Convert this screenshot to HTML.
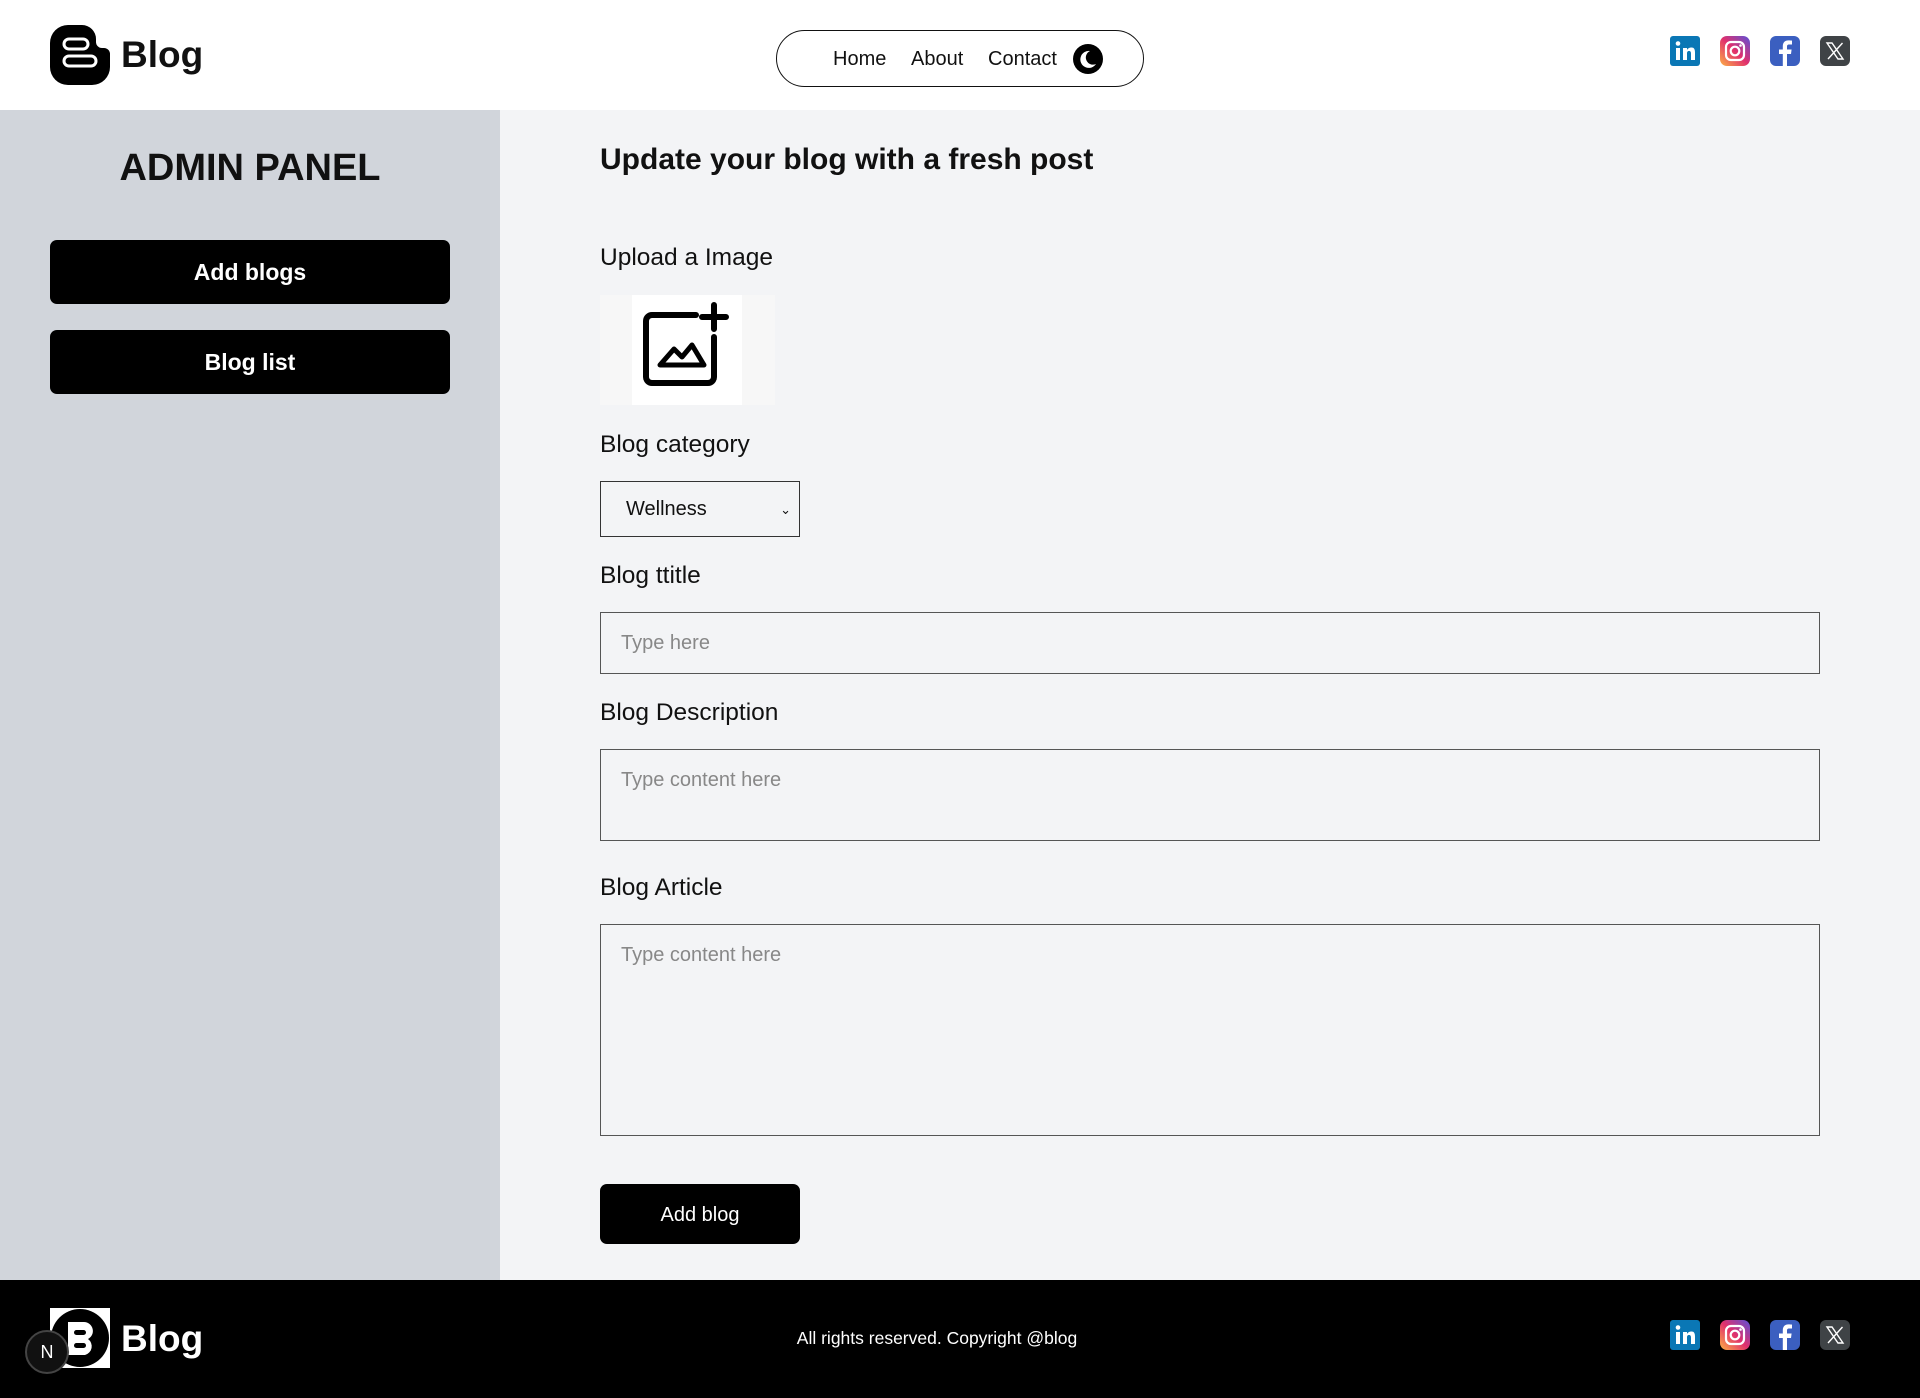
<!DOCTYPE html>
<html><head><meta charset="utf-8"><style>
*{box-sizing:border-box;margin:0;padding:0}
body{width:1920px;height:1398px;font-family:"Liberation Sans",Arial,sans-serif;color:#111;background:#f3f4f6;position:relative;overflow:hidden}
.abs{position:absolute}
header{position:absolute;left:0;top:0;width:1920px;height:110px;background:#fff}
.logo{position:absolute;left:50px;top:25px;width:60px;height:60px}
.brand{position:absolute;left:121px;top:34px;font-size:37px;font-weight:bold}
.nav{position:absolute;left:776px;top:30px;width:368px;height:57px;border:1.5px solid #111;border-radius:30px}
.nav span{position:absolute;top:17px;font-size:20px}
.soc{position:absolute;width:30px;height:30px}
.side{position:absolute;left:0;top:110px;width:500px;height:1170px;background:#d1d5db}
.btn{position:absolute;left:50px;width:400px;height:64px;background:#000;color:#fff;border-radius:7px;font-weight:bold;font-size:23px;text-align:center;line-height:64px}
.lbl{position:absolute;left:600px;font-size:24.5px}
.box{position:absolute;left:600px;border:1.5px solid #555;background:#f3f4f6;font-size:20px;color:#888;padding-left:20px}
footer{position:absolute;left:0;top:1280px;width:1920px;height:118px;background:#000}
</style></head><body>
<header>
<svg class="logo" viewBox="0 0 60 60"><path d="M18 0h14a14 14 0 0 1 14 14v3a6 6 0 0 0 6 6h2a6 6 0 0 1 6 6v13a18 18 0 0 1-18 18H18A18 18 0 0 1 0 42V18A18 18 0 0 1 18 0z" fill="#000"/><rect x="14" y="14" width="24" height="10" rx="5" fill="none" stroke="#fff" stroke-width="3"/><rect x="14" y="31" width="32" height="10" rx="5" fill="none" stroke="#fff" stroke-width="3"/></svg>
<div class="brand">Blog</div>
<div class="nav"><span style="left:56px">Home</span><span style="left:134px">About</span><span style="left:211px">Contact</span>
<svg class="abs" style="left:296px;top:13px" width="30" height="30" viewBox="0 0 30 30"><circle cx="15" cy="15" r="15" fill="#000"/><path d="M17 7a8.5 8.5 0 1 0 6 13 7 7 0 0 1-6-13z" fill="#fff"/></svg></div>
<svg class="soc" style="left:1670px;top:36px" viewBox="0 0 30 30"><rect width="30" height="30" rx="3" fill="#0a77b5"/><rect x="6" y="12" width="4" height="12" fill="#fff"/><circle cx="8" cy="7.5" r="2.3" fill="#fff"/><path d="M13 12h4v2c1-2 3-2.5 4.5-2.5 3 0 3.5 2.5 3.5 5V24h-4v-6.5c0-1.5-.5-2.5-2-2.5s-2 1-2 2.5V24h-4z" fill="#fff"/></svg>
<svg class="soc" style="left:1720px;top:36px" viewBox="0 0 30 30"><defs><linearGradient id="ig" x1="0" y1="1" x2="1" y2="0"><stop offset="0" stop-color="#fcb045"/><stop offset=".5" stop-color="#e1306c"/><stop offset="1" stop-color="#5b51d8"/></linearGradient></defs><rect width="30" height="30" rx="7" fill="url(#ig)"/><rect x="6" y="6" width="18" height="18" rx="5" fill="none" stroke="#fff" stroke-width="2.2"/><circle cx="15" cy="15" r="4.3" fill="none" stroke="#fff" stroke-width="2.2"/><circle cx="20.5" cy="9.5" r="1.3" fill="#fff"/></svg>
<svg class="soc" style="left:1770px;top:36px" viewBox="0 0 30 30"><rect width="30" height="30" rx="6" fill="#3b5fc0"/><path d="M17 30V18h4l.6-4.5H17v-2.8c0-1.3.4-2.2 2.2-2.2H22V4.6c-.5-.1-2-.2-3.6-.2-3.5 0-5.6 2.1-5.6 5.9v3.2H9V18h3.8v12z" fill="#fff"/></svg>
<svg class="soc" style="left:1820px;top:36px" viewBox="0 0 30 30"><rect width="30" height="30" rx="6" fill="#3f4346"/><path d="M7 7h5l11 16h-5zM22.5 7L8 23" stroke="#fff" stroke-width="1.4" fill="none"/></svg>
</header>
<div class="side">
<div class="abs" style="left:0;width:500px;top:37px;text-align:center;font-size:38px;font-weight:bold">ADMIN PANEL</div>
<div class="btn" style="top:130px">Add blogs</div>
<div class="btn" style="top:220px">Blog list</div>
</div>
<div class="abs" style="left:600px;top:143px;font-size:30px;font-weight:bold">Update your blog with a fresh post</div>
<div class="lbl" style="top:244px">Upload a Image</div>
<div class="abs" style="left:600px;top:295px;width:175px;height:110px;background:#f7f7f7"></div>
<svg class="abs" style="left:632px;top:295px" width="110" height="110" viewBox="0 0 110 110"><rect width="110" height="110" fill="#fff"/><path d="M64 20H20a6 6 0 0 0-6 6v56a6 6 0 0 0 6 6h56a6 6 0 0 0 6-6V42" fill="none" stroke="#000" stroke-width="6" stroke-linecap="round"/><path d="M82 10v24M70 22h24" stroke="#000" stroke-width="6" stroke-linecap="round"/><path d="M28 70l14-16 8 8 10-12 12 20z" fill="none" stroke="#000" stroke-width="5" stroke-linejoin="round"/></svg>
<div class="lbl" style="top:431px">Blog category</div>
<div class="box" style="top:481px;width:200px;height:56px;color:#111;line-height:55px;padding-left:25px;border-color:#333">Wellness<span class="abs" style="right:8px;top:0;font-size:13px">&#8964;</span></div>
<div class="lbl" style="top:562px">Blog ttitle</div>
<div class="box" style="top:612px;width:1220px;height:62px;line-height:61px">Type here</div>
<div class="lbl" style="top:699px">Blog Description</div>
<div class="box" style="top:749px;width:1220px;height:92px;padding-top:19px">Type content here</div>
<div class="lbl" style="top:874px">Blog Article</div>
<div class="box" style="top:924px;width:1220px;height:212px;padding-top:19px">Type content here</div>
<div class="abs" style="left:600px;top:1184px;width:200px;height:60px;background:#000;color:#fff;border-radius:7px;font-size:20px;text-align:center;line-height:62px">Add blog</div>
<footer>
<div class="abs" style="left:50px;top:28px;width:60px;height:60px;background:#fff"></div>
<svg class="abs" style="left:50px;top:28px" width="60" height="60" viewBox="0 0 60 60"><circle cx="30" cy="30" r="29" fill="#000"/><path d="M18 14h16a9 9 0 0 1 4 17 9 9 0 0 1-3 16H18z" fill="#fff"/><rect x="24" y="22" width="12" height="5" rx="2.5" fill="#000"/><rect x="24" y="35" width="12" height="5" rx="2.5" fill="#000"/></svg>
<div class="abs" style="left:121px;top:38px;font-size:37px;font-weight:bold;color:#fff">Blog</div>
<div class="abs" style="left:25px;top:50px;width:44px;height:44px;border-radius:50%;background:#111;border:2px solid #444;color:#fff;text-align:center;line-height:40px;font-size:18px">N</div>
<div class="abs" style="left:0;width:1874px;top:48px;text-align:center;color:#fff;font-size:17.5px">All rights reserved. Copyright @blog</div>
<svg class="soc" style="left:1670px;top:40px" viewBox="0 0 30 30"><rect width="30" height="30" rx="3" fill="#0a77b5"/><rect x="6" y="12" width="4" height="12" fill="#fff"/><circle cx="8" cy="7.5" r="2.3" fill="#fff"/><path d="M13 12h4v2c1-2 3-2.5 4.5-2.5 3 0 3.5 2.5 3.5 5V24h-4v-6.5c0-1.5-.5-2.5-2-2.5s-2 1-2 2.5V24h-4z" fill="#fff"/></svg>
<svg class="soc" style="left:1720px;top:40px" viewBox="0 0 30 30"><rect width="30" height="30" rx="7" fill="url(#ig)"/><rect x="6" y="6" width="18" height="18" rx="5" fill="none" stroke="#fff" stroke-width="2.2"/><circle cx="15" cy="15" r="4.3" fill="none" stroke="#fff" stroke-width="2.2"/><circle cx="20.5" cy="9.5" r="1.3" fill="#fff"/></svg>
<svg class="soc" style="left:1770px;top:40px" viewBox="0 0 30 30"><rect width="30" height="30" rx="6" fill="#3b5fc0"/><path d="M17 30V18h4l.6-4.5H17v-2.8c0-1.3.4-2.2 2.2-2.2H22V4.6c-.5-.1-2-.2-3.6-.2-3.5 0-5.6 2.1-5.6 5.9v3.2H9V18h3.8v12z" fill="#fff"/></svg>
<svg class="soc" style="left:1820px;top:40px" viewBox="0 0 30 30"><rect width="30" height="30" rx="6" fill="#3f4346"/><path d="M7 7h5l11 16h-5zM22.5 7L8 23" stroke="#fff" stroke-width="1.4" fill="none"/></svg>
</footer>
</body></html>
